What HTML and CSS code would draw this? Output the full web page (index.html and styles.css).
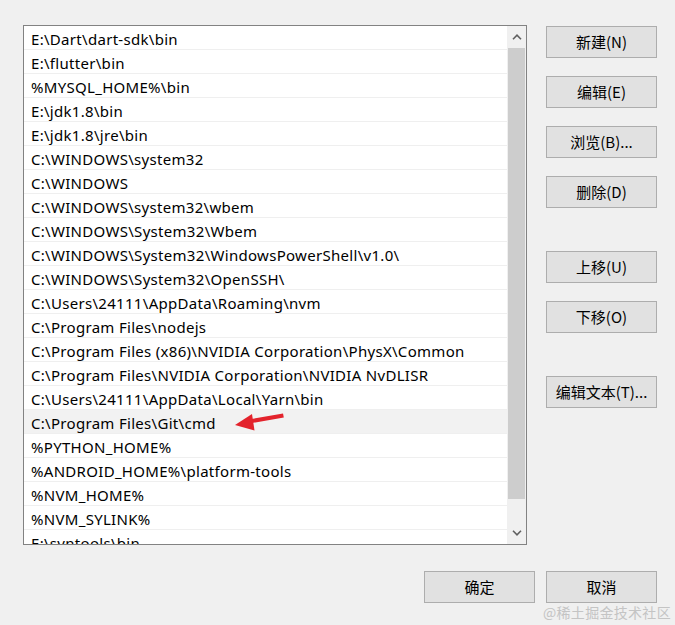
FILE: index.html
```html
<!DOCTYPE html>
<html lang="zh-CN">
<head>
<meta charset="utf-8">
<title>编辑环境变量</title>
<link rel="stylesheet" href="styles.css">
</head>
<body>
<div class="dialog">
  <div class="top">
    <div class="listbox">
      <div class="rows">
        <div class="row">E:\Dart\dart-sdk\bin</div>
        <div class="row">E:\flutter\bin</div>
        <div class="row">%MYSQL_HOME%\bin</div>
        <div class="row">E:\jdk1.8\bin</div>
        <div class="row">E:\jdk1.8\jre\bin</div>
        <div class="row">C:\WINDOWS\system32</div>
        <div class="row">C:\WINDOWS</div>
        <div class="row">C:\WINDOWS\system32\wbem</div>
        <div class="row">C:\WINDOWS\System32\Wbem</div>
        <div class="row">C:\WINDOWS\System32\WindowsPowerShell\v1.0\</div>
        <div class="row">C:\WINDOWS\System32\OpenSSH\</div>
        <div class="row">C:\Users\24111\AppData\Roaming\nvm</div>
        <div class="row">C:\Program Files\nodejs</div>
        <div class="row">C:\Program Files (x86)\NVIDIA Corporation\PhysX\Common</div>
        <div class="row">C:\Program Files\NVIDIA Corporation\NVIDIA NvDLISR</div>
        <div class="row">C:\Users\24111\AppData\Local\Yarn\bin</div>
        <div class="row hover">C:\Program Files\Git\cmd</div>
        <div class="row">%PYTHON_HOME%</div>
        <div class="row">%ANDROID_HOME%\platform-tools</div>
        <div class="row">%NVM_HOME%</div>
        <div class="row">%NVM_SYLINK%</div>
        <div class="row">E:\svntools\bin</div>
      </div>
      <div class="scrollbar">
        <div class="sb-btn">
          <svg width="10" height="6" viewBox="0 0 10 6"><path d="M1 5.2 L5 1.2 L9 5.2" fill="none" stroke="#606060" stroke-width="1.6"/></svg>
        </div>
        <div class="sb-thumb"></div>
        <div class="sb-track"></div>
        <div class="sb-btn">
          <svg width="10" height="6" viewBox="0 0 10 6"><path d="M1 0.8 L5 4.8 L9 0.8" fill="none" stroke="#606060" stroke-width="1.6"/></svg>
        </div>
      </div>
    </div>
    <div class="side">
      <div class="group">
        <button class="btn">新建(N)</button>
        <button class="btn">编辑(E)</button>
        <button class="btn">浏览(B)...</button>
        <button class="btn">删除(D)</button>
      </div>
      <div class="group">
        <button class="btn">上移(U)</button>
        <button class="btn">下移(O)</button>
      </div>
      <div class="group">
        <button class="btn">编辑文本(T)...</button>
      </div>
    </div>
  </div>
  <div class="bottom">
    <button class="btn">确定</button>
    <button class="btn">取消</button>
  </div>
</div>
<svg class="arrow" width="60" height="24" viewBox="0 0 60 24">
  <path d="M15 8.2 L48 2.6 L48.8 6.6 L15.8 12.2 Z" fill="#e3232c"/>
  <path d="M0 14 L17 3 L19.5 19.5 Z" fill="#e3232c"/>
</svg>
<div class="watermark">@稀土掘金技术社区</div>
</body>
</html>
```

FILE: styles.css
```css
* { box-sizing: border-box; }
html, body {
  margin: 0;
  padding: 0;
  background: #f0f0f0;
  width: 675px;
  height: 625px;
  overflow: hidden;
}
body {
  position: relative;
  font-family: "Noto Sans", "Noto Sans CJK SC", sans-serif;
  color: #000;
}
.dialog {
  padding: 25px 0 0 23px;
}
.top {
  display: flex;
  align-items: flex-start;
}
.listbox {
  width: 504px;
  height: 520px;
  border: 1px solid #828282;
  background: #fff;
  display: flex;
  overflow: hidden;
}
.rows {
  flex: 1;
  overflow: hidden;
}
.row {
  height: 24px;
  padding-top: 3px;
  line-height: 20px;
  padding-left: 7px;
  border-bottom: 1px solid #efefef;
  font-size: 15px;
  white-space: nowrap;
  letter-spacing: 0.3px;
}
.row.hover {
  background: #f2f2f2;
}
.scrollbar {
  width: 19px;
  background: #f0f0f0;
  display: flex;
  flex-direction: column;
}
.sb-btn {
  height: 22px;
  display: flex;
  align-items: center;
  justify-content: center;
}
.sb-thumb {
  height: 451px;
  margin: 0 1px;
  background: #cdcdcd;
}
.sb-track {
  flex: 1;
}
.side {
  margin-left: 19px;
  padding-top: 1px;
  display: flex;
  flex-direction: column;
  gap: 43px;
}
.group {
  display: flex;
  flex-direction: column;
  gap: 18px;
}
.btn {
  width: 111px;
  height: 32px;
  background: #e1e1e1;
  border: 1px solid #adadad;
  font-family: "Noto Sans CJK SC", "Noto Sans", sans-serif;
  font-size: 15px;
  color: #000;
  padding: 0;
  margin: 0;
  line-height: 30px;
}
.bottom {
  display: flex;
  gap: 11px;
  margin-top: 26px;
  padding-left: 401px;
}
.arrow {
  position: absolute;
  left: 235px;
  top: 411px;
}
.watermark {
  position: absolute;
  left: 543px;
  top: 602px;
  font-family: "Noto Sans CJK SC", sans-serif;
  font-size: 14px;
  line-height: 20px;
  white-space: nowrap;
  letter-spacing: 0.3px;
  color: #c4c4c4;
}
```
